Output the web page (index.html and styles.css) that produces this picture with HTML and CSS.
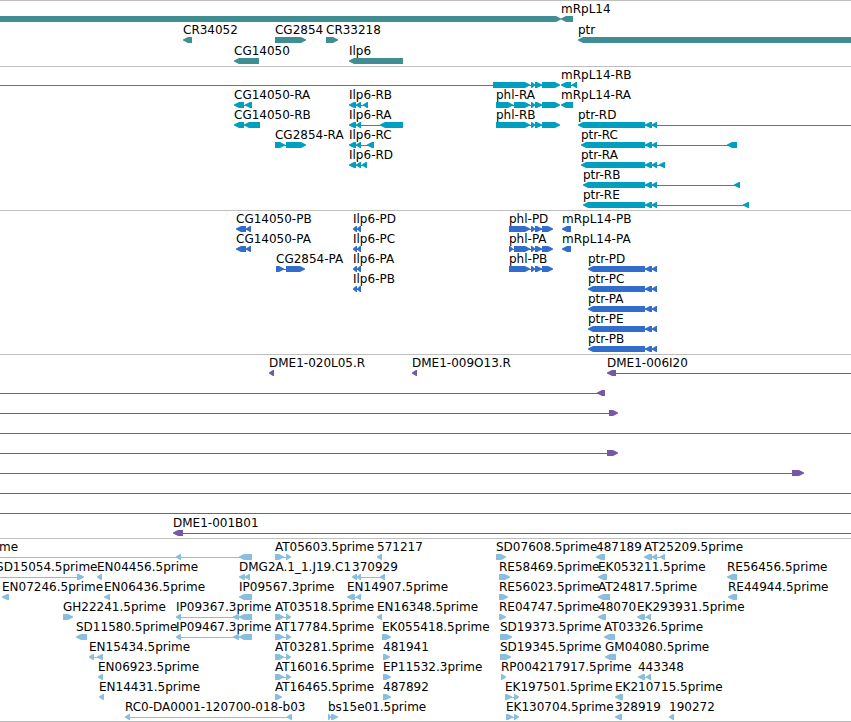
FILE: index.html
```html
<!DOCTYPE html>
<html lang="en">
<head>
    <meta charset="UTF-8">
    <meta name="viewport" content="width=device-width, initial-scale=1.0">
    <title>Genome Map</title>
    <link rel="stylesheet" href="styles.css">
</head>
<body>
    <main>
        <section class="track genes" id="genes"></section>
        <section class="track transcripts" id="transcripts"></section>
        <section class="track proteins" id="proteins"></section>
        <section class="track clones" id="clones"></section>
        <section class="track ests" id="ests"></section>
    </main>
    <script>
        // visible length of the region, all positions below use this unit
        const SPAN = 851;
        const LEFT = -20, RIGHT = 871;

        // shared exons
        const phl = [[531, 535], [535, 542]];
        const ptr = [[645, 652], [652, 657]];
        const ilp = [[349, 356], [356, 361]];
        const cds = [[353, 357], [357, 361]];
        const ptrCds = [[588, 645], ...ptr];
        const at = [[275, 284], [286, 291]];
        const ip = [[176, 181], [233, 239], [239, 252]];

        // feature: [label, strand, exons, line start, line end]
        const tracks = {
            genes: [
                [["", "+", [[LEFT, 561]]], ["mRpL14", "-", [[561, 573]]]],
                [["CR34052", "-", [[183, 192]]], ["CG2854", "+", [[275, 306]]], ["CR33218", "+", [[326, 338]]], ["ptr", "-", [[578, RIGHT]]]],
                [["CG14050", "-", [[234, 259]]], ["Ilp6", "-", [[349, 403]]]]
            ],
            transcripts: [
                [["", "+", [[493, 530], ...phl, [542, 560]], LEFT], ["mRpL14-RB", "-", [[561, 571], [572, 577]]]],
                [["CG14050-RA", "-", [[234, 244], [245, 252]]], ["Ilp6-RB", "-", [...ilp, [363, 368]]], ["phl-RA", "+", [[496, 513], [514, 530], ...phl, [542, 560]]], ["mRpL14-RA", "-", [[561, 573]]]],
                [["CG14050-RB", "-", [[234, 244], [244, 260]]], ["Ilp6-RA", "-", [...ilp, [380, 403]]], ["phl-RB", "+", [[496, 530], ...phl, [542, 560]]], ["ptr-RD", "-", [[578, 645], ...ptr], 578, RIGHT]],
                [["CG2854-RA", "+", [[275, 285], [286, 306]]], ["Ilp6-RC", "-", [...ilp, [367, 374]]], ["ptr-RC", "-", [[581, 645], ...ptr, [727, 737]]]],
                [["Ilp6-RD", "-", [...ilp, [362, 367]]], ["ptr-RA", "-", [[581, 645], ...ptr, [659, 665]]]],
                [["ptr-RB", "-", [[583, 645], ...ptr, [734, 740]]]],
                [["ptr-RE", "-", [[583, 645], ...ptr, [743, 749]]]]
            ],
            proteins: [
                [["CG14050-PB", "-", [[236, 246], [246, 251]]], ["Ilp6-PD", "-", cds], ["phl-PD", "+", [[509, 530], ...phl, [542, 553]]], ["mRpL14-PB", "-", [[562, 571]]]],
                [["CG14050-PA", "-", [[236, 246], [246, 251]]], ["Ilp6-PC", "-", cds], ["phl-PA", "+", [[509, 513], [514, 530], ...phl, [542, 553]]], ["mRpL14-PA", "-", [[562, 571]]]],
                [["CG2854-PA", "+", [[276, 284], [286, 305]]], ["Ilp6-PA", "-", cds], ["phl-PB", "+", [[509, 530], ...phl, [542, 553]]], ["ptr-PD", "-", ptrCds]],
                [["Ilp6-PB", "-", cds], ["ptr-PC", "-", ptrCds]],
                [["ptr-PA", "-", ptrCds]],
                [["ptr-PE", "-", ptrCds]],
                [["ptr-PB", "-", ptrCds]]
            ],
            clones: [
                [["DME1-020L05.R", "-", [[269, 274]]], ["DME1-009O13.R", "-", [[412, 417]]], ["DME1-006I20", "-", [[607, 616]], 607, RIGHT]],
                [["", "-", [[597, 605]], LEFT]],
                [["", "+", [[609, 618]], LEFT]],
                [["", "+", [], LEFT, RIGHT]],
                [["", "+", [[607, 618]], LEFT]],
                [["", "+", [[792, 804]], LEFT]],
                [["", "+", [], LEFT, RIGHT]],
                [["", "+", [], LEFT, RIGHT]],
                [["DME1-001B01", "-", [[173, 183]], 173, RIGHT]]
            ],
            ests: [
                [["me", "-", [[176, 181], [239, 252]], -1], ["AT05603.5prime", "+", at], ["571217", "-", [[377, 382]]], ["SD07608.5prime", "+", [[496, 506]]], ["487189", "-", [[596, 605]]], ["AT25209.5prime", "-", [[644, 652], [652, 657], [660, 665]]]],
                [["SD15054.5prime", "+", [[77, 84]], -4], ["EN04456.5prime", "-", [[97, 102]]], ["DMG2A.1_1.J19.C1", "-", [[239, 245], [245, 250]]], ["370929", "-", [[352, 357], [357, 361], [380, 385]]], ["RE58469.5prime", "+", [[499, 510]]], ["EK053211.5prime", "-", [[598, 607]]], ["RE56456.5prime", "-", [[727, 737]]]],
                [["EN07246.5prime", "-", [[2, 9]]], ["EN06436.5prime", "-", [[104, 110]]], ["IP09567.3prime", "-", [[239, 252]]], ["EN14907.5prime", "-", [[347, 355], [356, 361]]], ["RE56023.5prime", "+", [[499, 508]]], ["AT24817.5prime", "-", [[598, 610]]], ["RE44944.5prime", "-", [[728, 737]]]],
                [["GH22241.5prime", "+", [[63, 73]]], ["IP09367.3prime", "-", ip], ["AT03518.5prime", "+", at], ["EN16348.5prime", "-", [[377, 382]]], ["RE04747.5prime", "+", [[499, 506]]], ["48070", "-", [[598, 606]]], ["EK293931.5prime", "-", [[637, 645], [646, 651]]]],
                [["SD11580.5prime", "-", [[76, 87]]], ["IP09467.3prime", "-", ip], ["AT17784.5prime", "+", at], ["EK055418.5prime", "+", [[382, 391]]], ["SD19373.5prime", "+", [[500, 512]]], ["AT03326.5prime", "-", [[604, 615]]]],
                [["EN15434.5prime", "-", [[89, 94], [97, 103]]], ["AT03281.5prime", "+", at], ["481941", "+", [[383, 390]]], ["SD19345.5prime", "+", [[500, 511]]], ["GM04080.5prime", "-", [[605, 616]]]],
                [["EN06923.5prime", "-", [[98, 103]]], ["AT16016.5prime", "+", at], ["EP11532.3prime", "+", [[383, 391]]], ["RP004217917.5prime", "+", [[501, 506]]], ["443348", "-", [[638, 645], [646, 651]]]],
                [["EN14431.5prime", "-", [[99, 104]]], ["AT16465.5prime", "+", [[275, 282]]], ["487892", "+", [[383, 391]]], ["EK197501.5prime", "+", [[505, 512], [514, 519]]], ["EK210715.5prime", "-", [[615, 623]]]],
                [["RC0-DA0001-120700-018-b03", "-", [[125, 130], [287, 292]]], ["bs15e01.5prime", "+", [[328, 331], [331, 338]]], ["EK130704.5prime", "+", [[506, 513], [514, 519]]], ["328919", "-", [[615, 622]]], ["190272", "-", [[669, 674]]]]
            ]
        };

        function addPiece(row, className, start, end) {
            const piece = document.createElement("span");
            piece.className = className;
            piece.style.left = `${start / SPAN * 100}%`;
            if (end !== undefined) piece.style.width = `${(end - start) / SPAN * 100}%`;
            row.appendChild(piece);
            return piece;
        }

        function drawFeature(row, [label, strand, exons, from, to]) {
            const start = from !== undefined ? from : exons[0][0];
            const end = to !== undefined ? to : exons[exons.length - 1][1] - 2;
            if (exons.length !== 1 || from !== undefined) addPiece(row, "intron", start + (strand === "-" && start > 0 ? 2 : 0), end);
            exons.forEach(([a, b]) => addPiece(row, strand === "+" ? "exon forward" : "exon reverse", a, b));
            if (label) addPiece(row, "label", start).textContent = label;
        }

        Object.keys(tracks).forEach(id => {
            const track = document.getElementById(id);
            tracks[id].forEach(features => {
                const row = document.createElement("div");
                row.className = "row";
                features.forEach(feature => drawFeature(row, feature));
                track.appendChild(row);
            });
        });
    </script>
</body>
</html>
```
FILE: styles.css
```css
:root {
    --linea: #bebebe;
    --genes: #3f8e94;
    --transcripts: #009fc0;
    --proteins: #326dcc;
    --clones: #7658a8;
    --ests: #8abede;
}

body {
    margin: 0;
    background: #fff;
    color: #000;
    font-family: "DejaVu Sans", Verdana, sans-serif;
    font-size: 12px;
    line-height: 14px;
}

main {
    overflow: hidden;
    border-bottom: 1px solid var(--linea);
}

.track {
    display: flex;
    flex-direction: column;
    padding: 1px 0 2px;
    border-top: 1px solid var(--linea);
}

.track:last-child {
    padding-bottom: 1px;
}

.genes {
    gap: 1px;
    color: var(--genes);
}

.transcripts {
    color: var(--transcripts);
}

.proteins {
    color: var(--proteins);
}

.clones {
    color: var(--clones);
}

.ests {
    color: var(--ests);
}

.row {
    position: relative;
    height: 20px;
}

/* features sit on the row at their place in the sequence */
.label,
.exon,
.intron {
    position: absolute;
}

.label {
    top: 0;
    color: #000;
    white-space: nowrap;
}

.exon {
    bottom: 0;
    height: 6px;
    background-color: currentColor;
}

/* the head never gets longer than the exon itself */
.forward {
    clip-path: polygon(0 0, max(1px, 100% - 5px) 0, 100% 40%, 100% 60%, max(1px, 100% - 5px) 100%, 0 100%);
}

.reverse {
    clip-path: polygon(min(5px, 100% - 1px) 0, 100% 0, 100% 100%, min(5px, 100% - 1px) 100%, 0 60%, 0 40%);
}

.intron {
    bottom: 2px;
    height: 1px;
    background-color: currentColor;
}
```
